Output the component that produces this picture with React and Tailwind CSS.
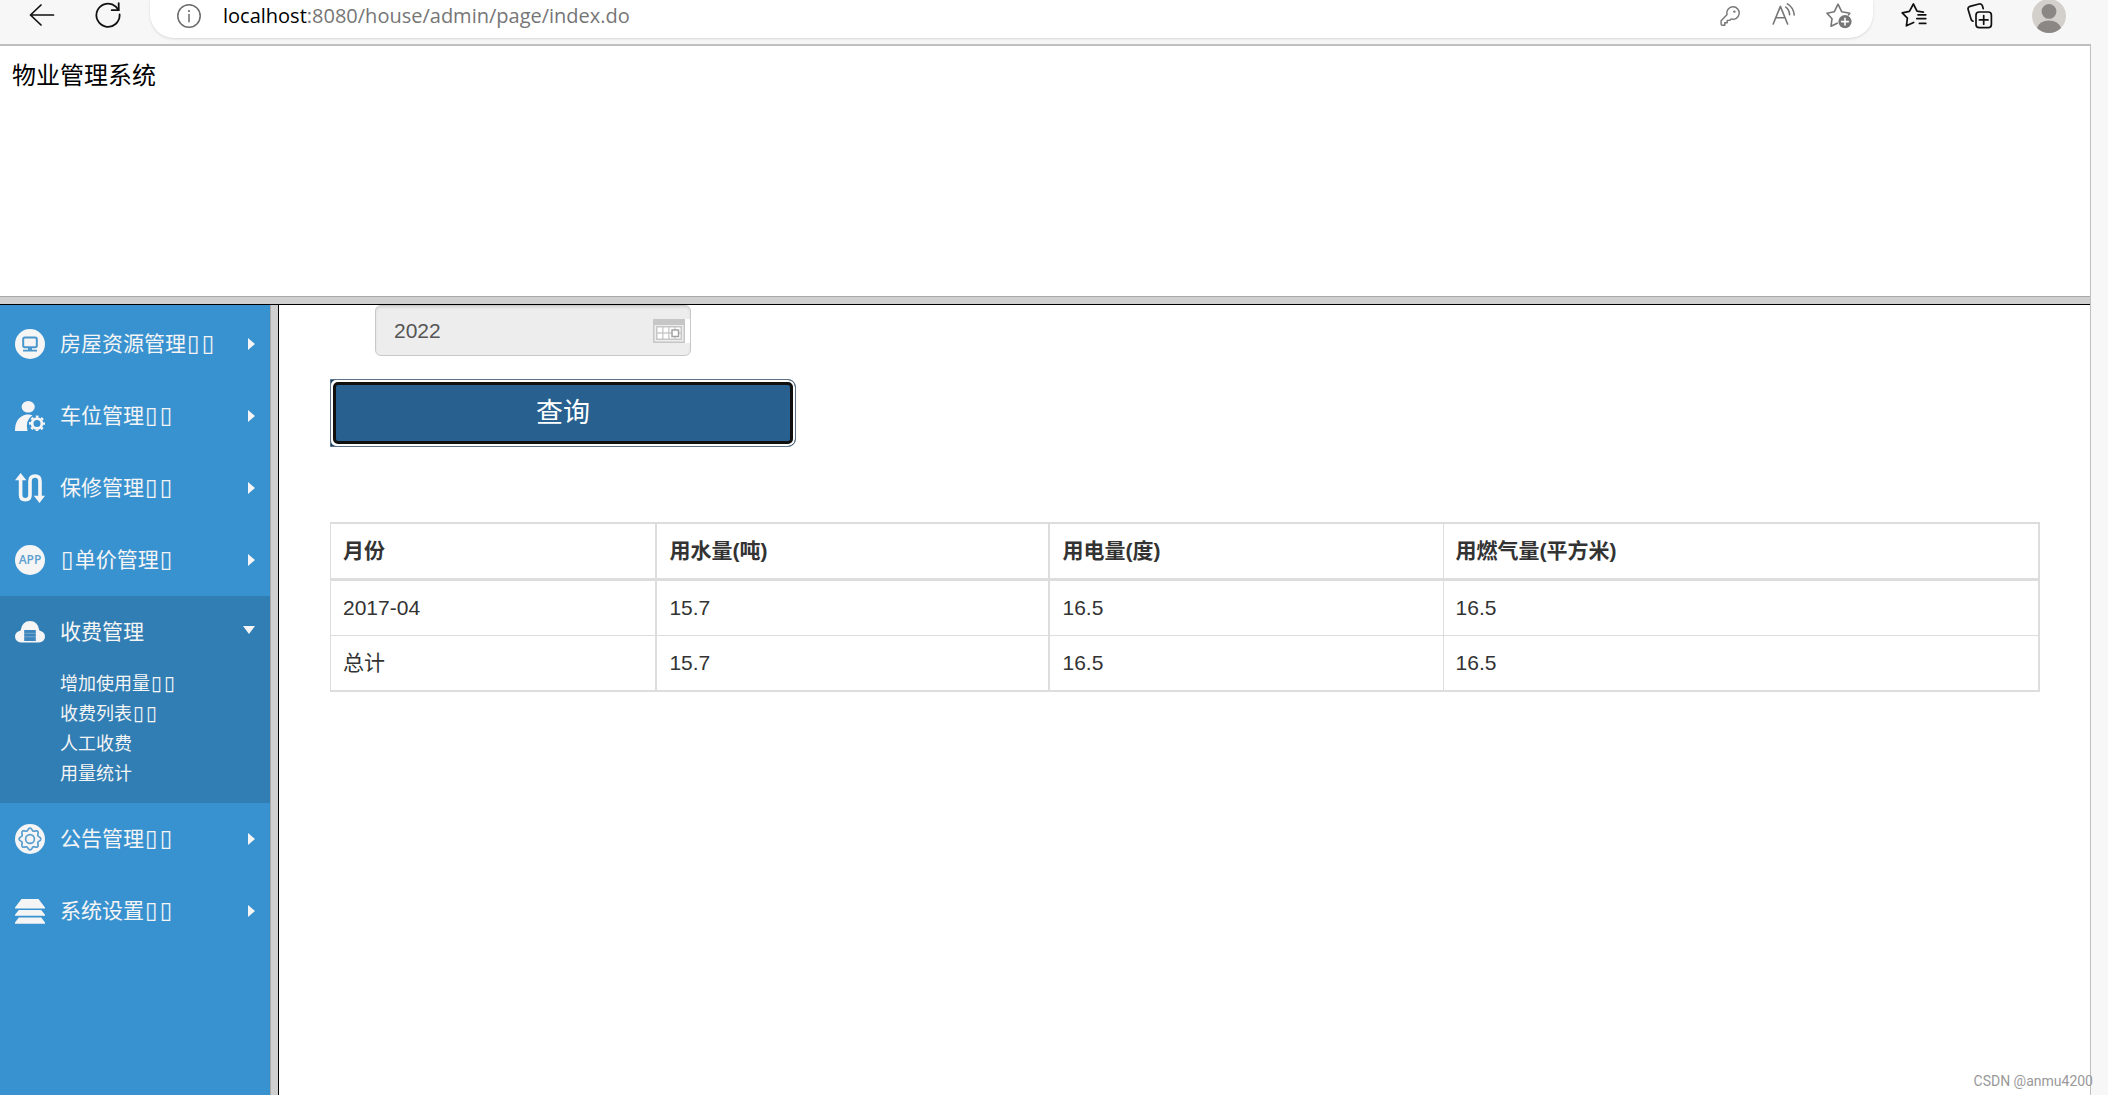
import React from "react";

const SANS = "font-['Liberation_Sans','Noto_Sans_CJK_SC',sans-serif]";
const UI = "font-['Open_Sans','Noto_Sans_CJK_SC',sans-serif]";

/* ---------- browser toolbar icons ---------- */

function BackIcon() {
  return (
    <svg width="26" height="24" viewBox="0 0 26 24" fill="none" stroke="#111" strokeWidth="1.7" strokeLinecap="round" strokeLinejoin="round">
      <path d="M24.5 12H1.5M12 2L1.5 12l10.5 10" />
    </svg>
  );
}

function ReloadIcon() {
  return (
    <svg width="26" height="26" viewBox="0 0 26 26" fill="none" stroke="#111" strokeWidth="1.8" strokeLinecap="round" strokeLinejoin="round">
      <path d="M24.6 12.5A11.6 11.6 0 1 1 20.8 4.6L23.6 8" />
      <path d="M23.7 1.2v7h-7" />
    </svg>
  );
}

function InfoIcon() {
  return (
    <svg width="24" height="24" viewBox="0 0 24 24" fill="none" stroke="#6b6b6b" strokeWidth="1.5">
      <circle cx="12" cy="12" r="11.2" />
      <path d="M12 10.4v7.4" strokeLinecap="round" />
      <circle cx="12" cy="7" r="1.1" fill="#6b6b6b" stroke="none" />
    </svg>
  );
}

function KeyIcon() {
  return (
    <svg width="20" height="20" viewBox="0 0 20 20" fill="none" stroke="#767676" strokeWidth="1.4" strokeLinejoin="round">
      <path d="M13 .8a6.1 6.1 0 0 0-5.9 7.8L1.1 14.7v3.3q0 1.2 1.2 1.2h2.5v-2.4h2.4v-2.4h2.4l1.5-1.5A6.2 6.2 0 1 0 13 .8z" />
      <circle cx="14.4" cy="5.6" r="1.2" fill="#767676" stroke="none" />
    </svg>
  );
}

function ReadAloudIcon() {
  return (
    <svg width="24" height="22" viewBox="0 0 24 22" fill="none" stroke="#767676" strokeWidth="1.6" strokeLinecap="round" strokeLinejoin="round">
      <path d="M1.2 21L8.400 3.400 15.600 21M3.800 14.800h9.200" />
      <path d="M13.800 4.200q3.400 2.400 3.800 7.400M15.400.9q6 3.400 6.800 11" />
    </svg>
  );
}

function StarAddIcon() {
  return (
    <svg width="26" height="26" viewBox="0 0 26 26" fill="none" stroke="#767676" strokeWidth="1.6" strokeLinecap="round" strokeLinejoin="round">
      <path d="M11.2 20.200L5 23.200l1-7.400L1 10.200l7.200-1.400L12 1.200l3.800 7.600 8 1.400-1.200 1.600" />
      <circle cx="19" cy="18.600" r="6.600" fill="#767676" stroke="none" />
      <path d="M19 15.200v6.800M15.600 18.600h6.800" stroke="#fff" />
    </svg>
  );
}

function FavoritesIcon() {
  return (
    <svg width="26" height="24" viewBox="0 0 26 24" fill="none" stroke="#111" strokeWidth="1.7" strokeLinecap="round" strokeLinejoin="round">
      <path d="M12.600 19.400L5.400 22.800l1-7.600L1.200 9.800l7.200-1.400L12.400 1l3.600 7.200 6.400 1" />
      <path d="M17 11.800h7.800M15.800 15.600h9M18.400 20.400h6.400" />
    </svg>
  );
}

function CollectionsIcon() {
  return (
    <svg width="26" height="26" viewBox="0 0 26 26" fill="none" stroke="#111" strokeWidth="1.7" strokeLinecap="round" strokeLinejoin="round">
      <rect x="9" y="9" width="15.4" height="15.6" rx="3.2" />
      <path d="M16.7 12.600v8.600M12.400 16.900H21" />
      <path d="M6 18.200q-1.600-.6-2-2.200L1.200 6.800q-.8-2.600 1.800-3.400L12 1q2.600-.6 3.400 1.800l.8 2.800" />
    </svg>
  );
}

function AvatarIcon() {
  return (
    <svg width="34" height="34" viewBox="0 0 34 34">
      <circle cx="17" cy="17" r="17" fill="#d3d0cc" />
      <circle cx="17" cy="12.4" r="7.4" fill="#8b8785" />
      <path d="M5 29q2.600-7.600 12-7.600T29 29a17 17 0 0 1-24 0z" fill="#8b8785" />
    </svg>
  );
}

/* ---------- menu icons ---------- */

function HouseIcon() {
  return (
    <svg width="30" height="30" viewBox="0 0 30 30">
      <circle cx="15" cy="15" r="15" fill="#f5f5f5" />
      <rect x="8.2" y="8.6" width="13.6" height="9.6" rx="1.6" fill="none" stroke="#4a97ce" strokeWidth="2" />
      <path d="M13 18.5h4v2.300h5v1.800H8v-1.800h5z" fill="#4a97ce" />
    </svg>
  );
}

function UserGearIcon() {
  return (
    <svg width="30" height="30" viewBox="0 0 30 30">
      <ellipse cx="13.2" cy="5.8" rx="6.6" ry="5.8" fill="#f5f5f5" />
      <path d="M0 30q0-14 11.500-16.400 3.500-.4 6 .6Q10 19 12.500 30z" fill="#f5f5f5" />
      <circle cx="22" cy="22.5" r="4.9" fill="none" stroke="#f5f5f5" strokeWidth="2.8" />
      <circle cx="22" cy="22.5" r="6.9" fill="none" stroke="#f5f5f5" strokeWidth="2.2" strokeDasharray="2.71 2.71" strokeDashoffset="1.35" />
    </svg>
  );
}

function RouteIcon() {
  return (
    <svg width="30" height="30" viewBox="0 0 30 30">
      <path d="M5.600 6v16q0 4.700 4.700 4.700T15 22V8.200q0-5.200 5-5.200t5 5.200V23" fill="none" stroke="#f5f5f5" strokeWidth="3.6" />
      <path d="M0 7.200L5.600 0l5.800 7.200zM18.800 22.800H30L24.500 30z" fill="#f5f5f5" />
    </svg>
  );
}

function AppIcon() {
  return (
    <span className={`flex size-[30px] items-center justify-center rounded-full bg-[#f5f5f5] text-[12px] font-semibold text-[#5c9fd0] ${UI}`}>
      APP
    </span>
  );
}

function CloudIcon() {
  return (
    <svg width="30" height="22" viewBox="0 0 30 22">
      <path d="M6 21.500a6 6 0 0 1-6-6q0-4.500 5.600-6Q7 0 15 0t9.400 9.500q5.600 1.500 5.600 6a6 6 0 0 1-6 6z" fill="#f5f5f5" />
      <rect x="9.2" y="9" width="11.6" height="11" fill="#3d85bd" />
      <path d="M9.200 12.300h11.600M9.200 15.800h11.600" stroke="#9cc0dc" strokeWidth=".6" />
    </svg>
  );
}

function GearIcon() {
  const teeth = [];
  for (let i = 0; i <= 96; i++) {
    const a = (i / 96) * Math.PI * 2;
    const r = 9.7 + 1.2 * Math.cos(a * 8);
    teeth.push(`${(15 + r * Math.cos(a)).toFixed(2)},${(15 + r * Math.sin(a)).toFixed(2)}`);
  }
  return (
    <svg width="30" height="30" viewBox="0 0 30 30">
      <circle cx="15" cy="15" r="15" fill="#f5f5f5" />
      <polyline points={teeth.join(" ")} fill="none" stroke="#5a9fd0" strokeWidth="1.7" />
      <circle cx="15" cy="15" r="4.4" fill="none" stroke="#5a9fd0" strokeWidth="1.7" />
    </svg>
  );
}

function LayersIcon() {
  return (
    <svg width="30" height="25" viewBox="0 0 30 25" fill="#f5f5f5">
      <path d="M6.500 0h17L30 8.600V9.500H0V8.600zM3.800 11h22.400L30 15.800v1H0v-1zM3.800 18.500h22.400L30 23.600v1.200H0v-1.200z" />
    </svg>
  );
}

function CalendarIcon() {
  return (
    <svg width="37" height="24" viewBox="0 0 37 24">
      <rect width="37" height="24" fill="#fff" />
      <rect width="32" height="24" fill="#c6c6c6" />
      <rect x="1.5" y="6" width="29" height="16.5" fill="#ededed" />
      <rect x="3" y="7" width="26" height="14" fill="#c6c6c6" />
      <g fill="#fff">
        <rect x="4.5" y="8.5" width="4.7" height="4.8" />
        <rect x="10.5" y="8.5" width="4.7" height="4.8" />
        <rect x="4.5" y="14.7" width="4.7" height="4.8" />
        <rect x="10.5" y="14.7" width="4.7" height="4.8" />
        <rect x="16.5" y="8.5" width="11" height="11" />
      </g>
      <path d="M16 14h12M22 8v12" stroke="#c6c6c6" strokeWidth="1.3" />
      <rect x="19" y="11" width="6.5" height="6.5" fill="#fff" stroke="#a3a3a3" strokeWidth="1.5" />
    </svg>
  );
}

/* ---------- data ---------- */

const MENU = [
  { icon: HouseIcon, label: "房屋资源管理▯▯" },
  { icon: UserGearIcon, label: "车位管理▯▯" },
  { icon: RouteIcon, label: "保修管理▯▯" },
  { icon: AppIcon, label: "▯单价管理▯" },
  {
    icon: CloudIcon,
    label: "收费管理",
    items: ["增加使用量▯▯", "收费列表▯▯", "人工收费", "用量统计"],
  },
  { icon: GearIcon, label: "公告管理▯▯" },
  { icon: LayersIcon, label: "系统设置▯▯" },
];

const HEAD = ["月份", "用水量(吨)", "用电量(度)", "用燃气量(平方米)"];
const ROWS = [
  ["2017-04", "15.7", "16.5", "16.5"],
  ["总计", "15.7", "16.5", "16.5"],
];

/* ---------- parts ---------- */

function Toolbar() {
  return (
    <header className="flex h-11 items-start bg-[#f7f7f7] pl-[29px] pr-[42px]">
      <button type="button" aria-label="后退" className="mt-[3px]"><BackIcon /></button>
      <button type="button" aria-label="刷新" className="ml-10 mt-[2px]"><ReloadIcon /></button>
      <div className="ml-[29px] flex h-[38px] flex-1 items-start rounded-b-[24px] bg-white pl-[27px] pr-[21px] shadow-sm">
        <span className="mt-1"><InfoIcon /></span>
        <div className={`ml-[22px] flex-1 text-[20px] leading-[31px] text-[#767676] ${UI}`}>
          <span className="text-black">localhost</span>:8080/house/admin/page/index.do
        </div>
        <button type="button" aria-label="密码" className="mt-[6px]"><KeyIcon /></button>
        <button type="button" aria-label="朗读" className="ml-8 mt-[3px]"><ReadAloudIcon /></button>
        <button type="button" aria-label="添加到收藏夹" className="ml-[30px] mt-[3px]"><StarAddIcon /></button>
      </div>
      <button type="button" aria-label="收藏夹" className="ml-7 mt-[3px]"><FavoritesIcon /></button>
      <button type="button" aria-label="集锦" className="ml-10 mt-[3px]"><CollectionsIcon /></button>
      <button type="button" aria-label="个人资料" className="-mt-px ml-[39px]"><AvatarIcon /></button>
    </header>
  );
}

function Label({ text }) {
  return [...text].map((ch, i) =>
    ch === "▯" ? (
      <span key={i} className="mx-px font-['DejaVu_Sans'] text-[110%] leading-none">{ch}</span>
    ) : (
      ch
    )
  );
}

function MenuEntry({ entry }) {
  const Icon = entry.icon;
  const open = Boolean(entry.items);
  return (
    <li className={open ? "bg-[#317eb4]" : ""}>
      <button type="button" aria-expanded={open} className="flex h-[72px] w-full items-center px-[15px] text-left">
        <span className="mr-[15px] shrink-0"><Icon /></span>
        <span className="flex-1 whitespace-nowrap"><Label text={entry.label} /></span>
        {open ? (
          <svg width="12" height="8" viewBox="0 0 12 8" className="mb-[5px]"><path d="M0 0h12L6 8z" fill="#f5f5f5" /></svg>
        ) : (
          <svg width="7" height="12" viewBox="0 0 7 12"><path d="M0 0v12l7-6z" fill="#f5f5f5" /></svg>
        )}
      </button>
      {open && (
        <ul className="pb-[15px] pl-[60px] text-[18px]">
          {entry.items.map((item) => (
            <li key={item} className="h-[30px] leading-[30px]"><a href="#"><Label text={item} /></a></li>
          ))}
        </ul>
      )}
    </li>
  );
}

const CELL = "border-[#ddd] p-3 text-left";
const RIGHT = ["border-r-2", "border-r-2", "border-r", "border-r-2"];
const WIDTH = ["w-[19.1%]", "w-[23%]", "w-[23%]", "w-[34.9%]"];

function UsageTable() {
  return (
    <table className="mt-[75px] w-full table-fixed border-separate border-spacing-0 border-l border-t-2 border-[#ddd] leading-[30px] text-[#333]">
      <thead>
        <tr>
          {HEAD.map((h, i) => (
            <th key={h} scope="col" className={`border-b-3 font-bold ${CELL} ${RIGHT[i]} ${WIDTH[i]}`}>{h}</th>
          ))}
        </tr>
      </thead>
      <tbody>
        {ROWS.map((row, r) => (
          <tr key={row[0]}>
            {row.map((c, i) => (
              <td key={i} className={`${r === ROWS.length - 1 ? "border-b-2" : "border-b"} ${CELL} ${RIGHT[i]}`}>{c}</td>
            ))}
          </tr>
        ))}
      </tbody>
    </table>
  );
}

export default function App() {
  return (
    <div className="relative flex min-h-screen flex-col bg-[#f7f7f7]">
      <Toolbar />
      <div className="mr-[17px] flex flex-1 flex-col border-r border-t-2 border-[#bfbfbf] bg-white">
        <div className={`h-[250px] px-3 pt-[11px] text-[24px] leading-9 text-black ${UI}`}>
          <h1>物业管理系统</h1>
        </div>
        <div className="h-[9px] border-b border-t border-b-black border-t-[#a9a9a9] bg-[#d0d0d0]" />
        <div className="flex flex-1">
          <nav className={`w-[270px] shrink-0 bg-[#3992d0] pt-[3px] text-[21px] text-[#f5f5f5] ${UI}`}>
            <ul>
              {MENU.map((entry) => (
                <MenuEntry key={entry.label} entry={entry} />
              ))}
            </ul>
          </nav>
          <div className="w-[9px] shrink-0 border-l border-r border-l-[#a9a9a9] border-r-black bg-[#d0d0d0]" />
          <main className={`min-w-0 flex-1 pl-[51px] pr-[50px] text-[21px] ${SANS}`}>
            <div className="ml-[45px] flex h-[51px] w-[316px] items-center rounded-[6px] border border-[#c8c8c8] bg-[#ededed] shadow-[inset_0_2px_2px_rgba(0,0,0,0.075)]">
              <input aria-label="年份" readOnly defaultValue="2022" className="min-w-0 flex-1 bg-transparent pl-[18px] text-[#555] outline-none" />
              <CalendarIcon />
            </div>
            <div className="mt-[23px] w-[466px] overflow-hidden rounded-r-[8px] border border-[#5d7286] bg-[#123c60]">
              <div className="rounded-l-[5px] rounded-r-[7px] bg-white p-[2px]">
                <button type="button" className="block h-[62px] w-full rounded-[5px] border-3 border-[#101010] bg-[#286090] text-[27px] text-white">
                  查询
                </button>
              </div>
            </div>
            <UsageTable />
          </main>
        </div>
      </div>
      <div className="absolute bottom-1 right-[15px] font-['Roboto',sans-serif] text-[14px] leading-5 text-[#999]">CSDN @anmu4200</div>
    </div>
  );
}
